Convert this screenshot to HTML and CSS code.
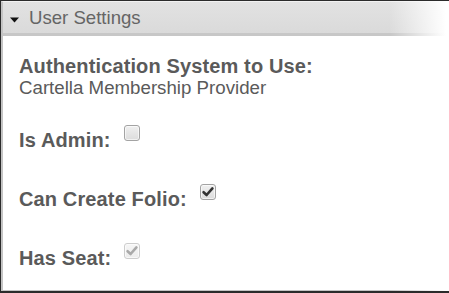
FILE: index.html
```html
<!DOCTYPE html>
<html>
<head>
<meta charset="utf-8">
<link rel="stylesheet" href="styles.css">
</head>
<body>
<div class="frame">
  <div class="panel">
    <div class="header">
      <svg class="caret" width="9" height="6" viewBox="0 0 9 6"><path d="M0 0.5 H9 L4.5 5.5 Z" fill="#111"/></svg>
      <span class="title">User Settings</span>
    </div>
    <div class="content">
      <div class="label">Authentication System to Use:</div>
      <div class="value">Cartella Membership Provider</div>
      <div class="row first">
        <span class="label">Is Admin:</span>
        <span class="cb"></span>
      </div>
      <div class="row">
        <span class="label">Can Create Folio:</span>
        <span class="cb checked"><svg width="16" height="16" viewBox="0 0 16 16"><path d="M3.6 8.2 L6.6 11 L12.4 4.4" fill="none" stroke="#333" stroke-width="2.6" stroke-linecap="round" stroke-linejoin="round"/></svg></span>
      </div>
      <div class="row">
        <span class="label">Has Seat:</span>
        <span class="cb checked disabled"><svg width="16" height="16" viewBox="0 0 16 16"><path d="M3.6 8.2 L6.6 11 L12.4 4.4" fill="none" stroke="#a9a9a9" stroke-width="2.6" stroke-linecap="round" stroke-linejoin="round"/></svg></span>
      </div>
    </div>
  </div>
  <div class="fade"></div>
</div>
</body>
</html>
```
FILE: styles.css
```css
html, body {
  margin: 0;
  padding: 0;
  background: #fff;
}
.frame {
  position: relative;
  width: 449px;
  height: 293px;
  box-sizing: border-box;
  border-top: 1px solid #2b2b2b;
  border-left: 1px solid #2b2b2b;
  border-bottom: 2px solid #2b2b2b;
  overflow: hidden;
  font-family: Arial, "Liberation Sans", sans-serif;
}
.panel {
  height: 100%;
  box-sizing: border-box;
  border-left: 2px solid #c4c4c4;
  border-top: 1px solid #f2f2f2;
  border-bottom: 1px solid #c4c4c4;
}
.header {
  display: flex;
  align-items: center;
  height: 34px;
  box-sizing: border-box;
  background: linear-gradient(#e2e2e2, #dadada);
  border-bottom: 3px solid #c7c7c7;
  padding-left: 7px;
}
.caret {
  margin-top: 4px;
}
.title {
  margin-left: 10px;
  font-size: 18.6px;
  line-height: 22px;
  color: #656565;
  margin-top: 1px;
}
.content {
  padding: 19px 0 0 16px;
  color: #5a5a5a;
}
.label {
  font-weight: bold;
  font-size: 20px;
  line-height: 22px;
  letter-spacing: 0.13px;
}
.value {
  font-size: 18.7px;
  line-height: 22px;
}
.row {
  display: flex;
  align-items: flex-start;
  margin-top: 37px;
}
.row.first {
  margin-top: 30px;
}
.cb {
  width: 16px;
  height: 16px;
  box-sizing: border-box;
  margin-left: 13px;
  margin-top: -4px;
  border: 1px solid #a3a3a3;
  border-radius: 3px;
  background: linear-gradient(#f0f0f0, #dcdcdc);
  box-shadow: inset 0 0 0 1px rgba(255,255,255,0.6);
  display: flex;
  align-items: center;
  justify-content: center;
  overflow: hidden;
}
.cb svg {
  display: block;
  flex: none;
}
.cb.disabled {
  border-color: #cdcdcd;
  background: linear-gradient(#f6f6f6, #ececec);
}
.fade {
  position: absolute;
  top: -1px;
  right: 0;
  width: 60px;
  height: 295px;
  background: linear-gradient(to right, rgba(255,255,255,0), #fff 95%);
}
```
